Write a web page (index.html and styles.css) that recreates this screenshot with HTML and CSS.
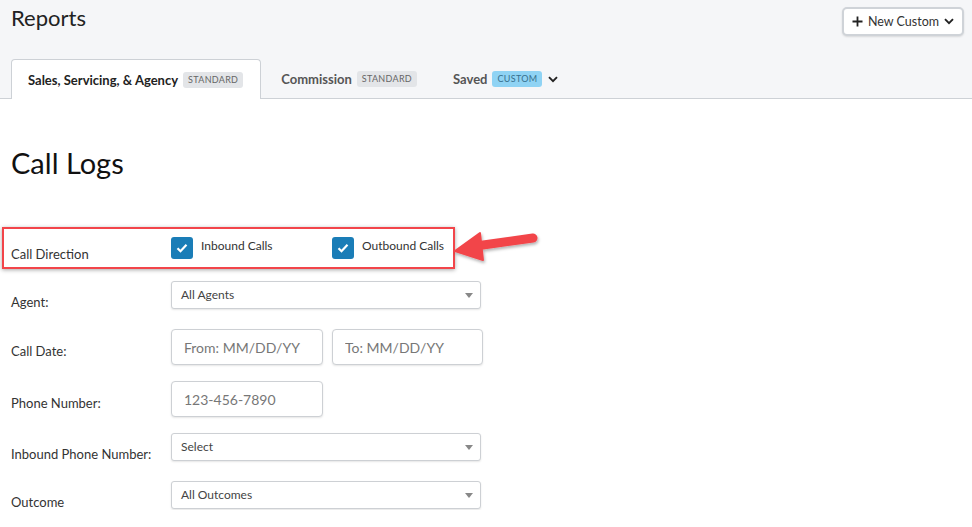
FILE: index.html
```html
<!DOCTYPE html>
<html lang="en">
<head>
    <meta charset="UTF-8">
    <title>Reports - Call Logs</title>
    <link rel="stylesheet" href="styles.css">
</head>
<body>
    <!-- page header -->
    <div class="page-header">
        <div class="header-top">
            <h1 class="page-title">Reports</h1>
            <button class="new-custom">
                <svg class="icon-plus" width="11" height="11" viewBox="0 0 11 11"><path d="M5.5 0.5v10M0.5 5.5h10" stroke="#222" stroke-width="1.8"/></svg>
                <span>New Custom</span>
                <svg class="icon-chev" width="10" height="7" viewBox="0 0 10 7"><path d="M1 1.2l4 4 4-4" fill="none" stroke="#222" stroke-width="1.9"/></svg>
            </button>
        </div>
        <div class="tabs">
            <div class="tab active">Sales, Servicing, &amp; Agency <span class="badge">Standard</span></div>
            <div class="tab">Commission <span class="badge">Standard</span></div>
            <div class="tab">Saved <span class="badge custom">Custom</span>
                <svg class="icon-chev" width="10" height="7" viewBox="0 0 10 7"><path d="M1 1.2l4 4 4-4" fill="none" stroke="#222" stroke-width="1.9"/></svg>
            </div>
        </div>
    </div>

    <!-- report form -->
    <div class="content">
        <h2 class="report-title">Call Logs</h2>

        <div class="form">
            <div class="field highlight">
                <label class="field-label">Call Direction</label>
                <div class="check-group">
                    <span class="check-option first"><span class="checkbox"><svg width="12" height="10" viewBox="0 0 12 10"><path d="M1.5 5.2l3 3 6-6.5" fill="none" stroke="#fff" stroke-width="2.2"/></svg></span>Inbound Calls</span>
                    <span class="check-option"><span class="checkbox"><svg width="12" height="10" viewBox="0 0 12 10"><path d="M1.5 5.2l3 3 6-6.5" fill="none" stroke="#fff" stroke-width="2.2"/></svg></span>Outbound Calls</span>
                </div>
            </div>

            <!-- annotation arrow -->
            <svg class="callout-arrow" width="100" height="50" viewBox="0 0 100 50">
                <defs>
                    <filter id="shadow" x="-20%" y="-30%" width="140%" height="160%">
                        <feDropShadow dx="1" dy="2" stdDeviation="1.5" flood-color="#000" flood-opacity="0.3"/>
                    </filter>
                </defs>
                <g filter="url(#shadow)">
                    <path d="M81 15 L24 23" stroke="#f2454a" stroke-width="9" stroke-linecap="round"/>
                    <path d="M3 28 L28 10 L31 37 Z" fill="#f2454a" stroke="#f2454a" stroke-width="2" stroke-linejoin="round"/>
                </g>
            </svg>

            <div class="field agent-row">
                <label class="field-label short">Agent:</label>
                <div class="select wide">All Agents</div>
            </div>

            <div class="field date-row">
                <label class="field-label">Call Date:</label>
                <div class="date-pair">
                    <input class="text-input" type="text" placeholder="From: MM/DD/YY">
                    <input class="text-input second" type="text" placeholder="To: MM/DD/YY">
                </div>
            </div>

            <div class="field">
                <label class="field-label">Phone Number:</label>
                <input class="text-input" type="text" placeholder="123-456-7890">
            </div>

            <div class="field">
                <label class="field-label short">Inbound Phone Number:</label>
                <div class="select wide">Select</div>
            </div>

            <div class="field date-row">
                <label class="field-label short">Outcome</label>
                <div class="select wide">All Outcomes</div>
            </div>
        </div>
    </div>
</body>
</html>
```

FILE: styles.css
```css
body {
    margin: 0;
    background: #ffffff;
    color: #333;
    font-family: 'Lato', 'Liberation Sans', sans-serif;
    overflow: hidden;
}

.page-header {
    background: #f5f6f8;
    border-bottom: 1px solid #cdd1d6;
    height: 99px;
    box-sizing: border-box;
}

.header-top {
    display: flex;
    justify-content: space-between;
    align-items: flex-start;
    padding: 0 8px 0 11px;
}

.page-title {
    margin: 5px 0 0 0;
    font-size: 22px;
    font-weight: normal;
    color: #222;
    line-height: 26px;
}

.new-custom {
    margin-top: 7px;
    height: 29px;
    width: 122px;
    display: flex;
    align-items: center;
    justify-content: center;
    gap: 5px;
    white-space: nowrap;
    background: #fff;
    border: 2px solid #cfd3d8;
    border-radius: 5px;
    box-shadow: 0 1px 2px rgba(0, 0, 0, 0.12);
    font-family: 'Lato', 'Liberation Sans', sans-serif;
    font-size: 12.5px;
    color: #333;
    padding: 0 4px;
}

.icon-chev {
    display: inline-block;
}

.tabs {
    display: flex;
    gap: 2px;
    margin-top: 23px;
    padding-left: 11px;
}

.tab {
    display: flex;
    align-items: center;
    height: 39px;
    padding: 0 15px 0 17px;
    box-sizing: border-box;
    font-size: 13px;
    font-weight: bold;
    color: #555;
    border: 1px solid transparent;
    border-bottom: none;
    border-radius: 4px 4px 0 0;
}

.tab.active {
    background: #fff;
    color: #222;
    border-color: #cdd1d6;
    height: 40px;
    padding: 0 17px 0 16px;
}

.badge {
    display: inline-block;
    margin-left: 5px;
    padding: 0 5px;
    height: 16px;
    line-height: 16px;
    border-radius: 3px;
    background: #e3e5e8;
    color: #666;
    font-size: 9px;
    font-weight: normal;
    text-transform: uppercase;
    letter-spacing: 0.3px;
}

.badge.custom {
    background: #8fd3f4;
    color: #37708d;
}

.tab .icon-chev {
    margin-left: 6px;
}

.content {
    padding-left: 11px;
}

.report-title {
    margin: 46px 0 0 0;
    font-size: 29px;
    font-weight: normal;
    color: #111;
    line-height: 36px;
}

.form {
    position: relative;
    margin-top: 46px;
}

.field {
    display: flex;
    align-items: flex-start;
    margin-top: 16px;
}

.field-label {
    width: 160px;
    flex-shrink: 0;
    font-size: 13px;
    line-height: 16px;
    padding-top: 14px;
    color: #333;
}

.field-label.short {
    padding-top: 13px;
}

.agent-row {
    margin-top: 12px;
}

.date-row {
    margin-top: 19px;
}

.highlight {
    margin: 0 0 0 -9px;
    width: 453px;
    height: 42px;
    box-sizing: border-box;
    border: 2px solid #f2454a;
    padding-left: 7px;
    box-shadow: 0 1px 4px rgba(0, 0, 0, 0.35);
}

.highlight .field-label {
    padding-top: 17px;
}

.check-group {
    display: flex;
    padding-top: 8px;
}

.check-option {
    display: flex;
    align-items: flex-start;
    font-size: 12px;
    line-height: 18px;
    color: #333;
}

.check-option.first {
    width: 161px;
}

.checkbox {
    width: 22px;
    height: 22px;
    border-radius: 3px;
    background: #1a7db7;
    display: flex;
    align-items: center;
    justify-content: center;
    margin-right: 8px;
}

.callout-arrow {
    position: absolute;
    left: 441px;
    top: -4px;
}

.select {
    position: relative;
    height: 28px;
    box-sizing: border-box;
    border: 1px solid #cdd0d4;
    border-radius: 3px;
    box-shadow: 0 1px 2px rgba(0, 0, 0, 0.1);
    padding-left: 9px;
    font-size: 12px;
    line-height: 26px;
    color: #444;
    background: #fff;
}

.select.wide {
    width: 310px;
}

.select::after {
    content: '';
    position: absolute;
    right: 7px;
    top: 11px;
    border-left: 4px solid transparent;
    border-right: 4px solid transparent;
    border-top: 5px solid #888;
}

.date-pair {
    display: flex;
    gap: 9px;
}

.text-input {
    width: 152px;
    height: 36px;
    box-sizing: border-box;
    border: 1px solid #cdd0d4;
    border-radius: 4px;
    box-shadow: 0 1px 2px rgba(0, 0, 0, 0.1);
    padding: 0 12px;
    font-family: 'Lato', 'Liberation Sans', sans-serif;
    font-size: 14px;
    color: #333;
    outline: none;
}

.text-input.second {
    width: 151px;
}

.text-input::placeholder {
    color: #777;
}
```
